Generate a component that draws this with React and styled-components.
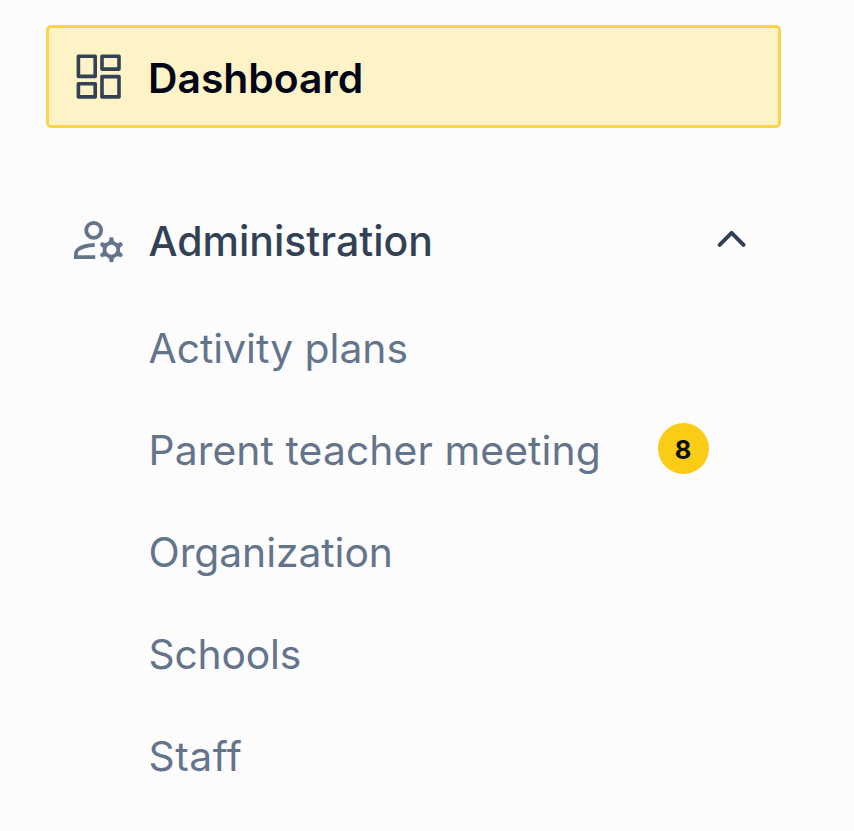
import React from "react";
import styled, { createGlobalStyle } from "styled-components";

const GlobalStyle = createGlobalStyle`
  *, *::before, *::after { box-sizing: border-box; }
  body { margin: 0; background: #fcfcfc; font-family: Inter, "Liberation Sans", sans-serif; }
`;

const Sidebar = styled.nav`
  display: flex;
  flex-direction: column;
  width: 854px;
  height: 831px;
  padding: 25px 73px 0 46px;
  overflow: hidden;
  background: #fcfcfc;
`;

const ActiveItem = styled.a`
  display: flex;
  align-items: center;
  height: 103px;
  padding: 0 27px;
  gap: 25px;
  border: 3px solid #fcd34d;
  border-radius: 5px;
  background: #fef3c7;
  color: #020617;
  font-size: 40.8px;
  font-weight: 600;
`;

const GroupHeader = styled.div`
  display: flex;
  align-items: center;
  height: 102px;
  margin-top: 62px;
  padding: 0 34px 0 26px;
  gap: 24.4px;
  color: #334155;
  font-size: 41px;
  font-weight: 500;
`;

const Label = styled.span`
  flex: 1;
  white-space: nowrap;
  padding-top: ${(p) => p.$drop || 0}px;
  letter-spacing: ${(p) => p.$tracking || 0}px;
`;

const Icon = styled.svg`
  display: block;
  flex: none;
  fill: none;
  stroke: ${(p) => p.$color};
  stroke-width: ${(p) => p.$weight};
  stroke-linejoin: round;
`;

const SubList = styled.ul`
  margin: 5px 0 0;
  padding: 0 72px 0 102.5px;
  list-style: none;
`;

const SubItem = styled.li`
  display: flex;
  align-items: center;
  height: 102px;
  color: #64748b;
  font-size: 40.8px;
  font-variant-ligatures: none;
`;

const Badge = styled.span`
  display: flex;
  align-items: center;
  justify-content: center;
  width: 51px;
  height: 51px;
  margin-bottom: 3px;
  padding: 2px 1px 0 0;
  border-radius: 50%;
  background: #facc15;
  color: #0c0f14;
  font-size: 25.5px;
  font-weight: 700;
`;

const GridIcon = () => (
  <Icon width="47" height="49" viewBox="0 0 47 49" $color="#334155" $weight={3.6}>
    <path d="M2.4 4.3h16.8v20.1H2.4zM26 4.3h17v12.8H26zM2.4 31.7h16.8v13.2H2.4zM26 24.6h17v20.3H26z" />
  </Icon>
);

const teeth = [0, 60, 120, 180, 240, 300];

const UserCogIcon = () => (
  <Icon width="52" height="48" viewBox="0 0 52 48" $color="#64748b" $weight={3.8}>
    <circle cx="21.7" cy="13.3" r="7.5" />
    <path d="M22.7 28C15 28.2 9 30 5.9 32.6C4.3 34 3.9 35.2 3.9 37.2V40.2H23.2" strokeLinejoin="miter" />
    <circle cx="39.4" cy="32.7" r="6.8" strokeWidth="3.6" />
    {teeth.map((angle) => (
      <path
        key={angle}
        d="M37.9 20.5h3l1 4 1.8 1.6h-8.6l1.8-1.6z"
        transform={`rotate(${angle} 39.4 32.7)`}
        fill="#64748b"
        strokeWidth="0.4"
      />
    ))}
  </Icon>
);

const ChevronUpIcon = () => (
  <Icon width="30" height="22" viewBox="0 0 30 22" $color="#334155" $weight={4}>
    <path d="M2.7 14.8 14.6 2.9l11.9 11.9" strokeLinecap="round" />
  </Icon>
);

const items = [
  { name: "Activity plans" },
  { name: "Parent teacher meeting", count: 8, tracking: 0.1 },
  { name: "Organization", tracking: -0.05 },
  { name: "Schools", tracking: -0.2 },
  { name: "Staff", tracking: 0.5 },
];

export default function App() {
  return (
    <>
      <GlobalStyle />
      <Sidebar>
        <ActiveItem>
          <GridIcon />
          <Label $drop={2}>Dashboard</Label>
        </ActiveItem>
        <GroupHeader>
          <UserCogIcon />
          <Label>Administration</Label>
          <ChevronUpIcon />
        </GroupHeader>
        <SubList>
          {items.map((item) => (
            <SubItem key={item.name}>
              <Label $tracking={item.tracking}>{item.name}</Label>
              {item.count && <Badge>{item.count}</Badge>}
            </SubItem>
          ))}
        </SubList>
      </Sidebar>
    </>
  );
}
